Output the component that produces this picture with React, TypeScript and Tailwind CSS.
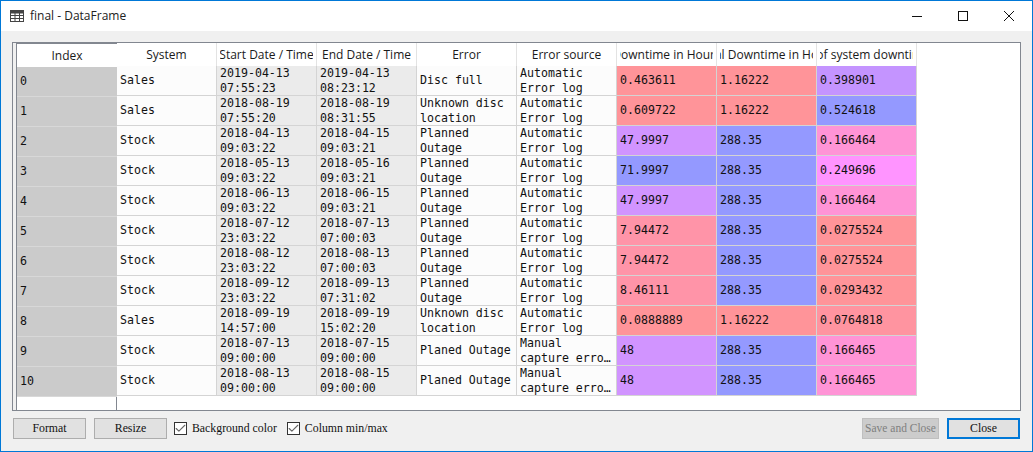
import React from 'react';
import { Check } from 'lucide-react';

const RED = 'bg-[#ff9499]';
const ROSE = 'bg-[#ff94a8]';
const ROSE2 = 'bg-[#ff94a0]';
const PURPLE = 'bg-[#d194ff]';
const VIOLET = 'bg-[#c494ff]';
const BLUE = 'bg-[#9499ff]';
const PINK = 'bg-[#ff94d6]';
const MAGENTA = 'bg-[#ff94ff]';

const HEADERS = [
  'System',
  'Start Date / Time',
  'End Date / Time',
  'Error',
  'Error source',
  'Downtime in Hours',
  'Total Downtime in Hours',
  '% of system downtime',
];

type Row = {
  system: string;
  start: string;
  end: string;
  error: string;
  source: string;
  values: [string, string][];
};

const AUTO = 'Automatic\nError log';
const MANUAL = 'Manual\ncapture erro…';
const PLANNED = 'Planned\nOutage';
const UNKNOWN = 'Unknown disc\nlocation';

const ROWS: Row[] = [
  { system: 'Sales', start: '2019-04-13\n07:55:23', end: '2019-04-13\n08:23:12', error: 'Disc full', source: AUTO, values: [['0.463611', RED], ['1.16222', RED], ['0.398901', VIOLET]] },
  { system: 'Sales', start: '2018-08-19\n07:55:20', end: '2018-08-19\n08:31:55', error: UNKNOWN, source: AUTO, values: [['0.609722', RED], ['1.16222', RED], ['0.524618', BLUE]] },
  { system: 'Stock', start: '2018-04-13\n09:03:22', end: '2018-04-15\n09:03:21', error: PLANNED, source: AUTO, values: [['47.9997', PURPLE], ['288.35', BLUE], ['0.166464', PINK]] },
  { system: 'Stock', start: '2018-05-13\n09:03:22', end: '2018-05-16\n09:03:21', error: PLANNED, source: AUTO, values: [['71.9997', BLUE], ['288.35', BLUE], ['0.249696', MAGENTA]] },
  { system: 'Stock', start: '2018-06-13\n09:03:22', end: '2018-06-15\n09:03:21', error: PLANNED, source: AUTO, values: [['47.9997', PURPLE], ['288.35', BLUE], ['0.166464', PINK]] },
  { system: 'Stock', start: '2018-07-12\n23:03:22', end: '2018-07-13\n07:00:03', error: PLANNED, source: AUTO, values: [['7.94472', ROSE], ['288.35', BLUE], ['0.0275524', RED]] },
  { system: 'Stock', start: '2018-08-12\n23:03:22', end: '2018-08-13\n07:00:03', error: PLANNED, source: AUTO, values: [['7.94472', ROSE], ['288.35', BLUE], ['0.0275524', RED]] },
  { system: 'Stock', start: '2018-09-12\n23:03:22', end: '2018-09-13\n07:31:02', error: PLANNED, source: AUTO, values: [['8.46111', ROSE], ['288.35', BLUE], ['0.0293432', RED]] },
  { system: 'Sales', start: '2018-09-19\n14:57:00', end: '2018-09-19\n15:02:20', error: UNKNOWN, source: AUTO, values: [['0.0888889', RED], ['1.16222', RED], ['0.0764818', ROSE2]] },
  { system: 'Stock', start: '2018-07-13\n09:00:00', end: '2018-07-15\n09:00:00', error: 'Planed Outage', source: MANUAL, values: [['48', PURPLE], ['288.35', BLUE], ['0.166465', PINK]] },
  { system: 'Stock', start: '2018-08-13\n09:00:00', end: '2018-08-15\n09:00:00', error: 'Planed Outage', source: MANUAL, values: [['48', PURPLE], ['288.35', BLUE], ['0.166465', PINK]] },
];

function HeaderCell({ label, className = '' }: { label: string; className?: string }) {
  return (
    <div className={`w-[100px] h-[23px] shrink-0 px-[3px] bg-white border-r border-[#e3e3e3] text-[12px] text-[#1a1a1a] ${className}`}>
      {/* long titles are clipped on both sides, as in a Qt header */}
      <div className="h-full flex items-center justify-center overflow-hidden">
        <span className="shrink-0 whitespace-nowrap">{label}</span>
      </div>
    </div>
  );
}

function Cell({ text, className = '' }: { text: string; className?: string }) {
  return (
    <div className={`w-[100px] h-[30px] shrink-0 flex items-center pl-[3px] border-r border-b border-[#d4d4d4] overflow-hidden ${className}`}>
      <span className="whitespace-pre leading-[15px]">{text}</span>
    </div>
  );
}

function CheckOption({ label }: { label: string }) {
  return (
    <label className="flex items-center gap-[5px]">
      <span className="w-[13px] h-[13px] flex items-center justify-center bg-white border border-[#333333]">
        <Check size={13} strokeWidth={2} className="text-[#666666] shrink-0" />
      </span>
      <span className="whitespace-nowrap">{label}</span>
    </label>
  );
}

export default function App() {
  return (
    <div className="w-[1033px] h-[452px] flex flex-col bg-[#f0f0f0] border border-[#0078d7] overflow-hidden">
      {/* Title bar */}
      <div className="h-[30px] shrink-0 bg-white flex items-center" style={{ fontFamily: '"Open Sans", sans-serif' }}>
        <svg width="14" height="12" viewBox="0 0 14 12" className="ml-[9px] text-[#444444]" fill="none" stroke="currentColor">
          <rect x="0.5" y="0.5" width="13" height="11" />
          <rect x="0.5" y="0.5" width="13" height="2.5" fill="currentColor" />
          <path d="M0.5 5.5H13.5M0.5 8.5H13.5M5 3V11.5M9.5 3V11.5" />
        </svg>
        <span className="ml-[6px] text-[12px] text-[#222222]">final - DataFrame</span>
        <div className="ml-auto flex items-center text-[#111111]">
          <div className="w-[46px] flex justify-center">
            <svg width="10" height="10" viewBox="0 0 10 10" stroke="currentColor" fill="none"><path d="M0 5.5H10" /></svg>
          </div>
          <div className="w-[46px] flex justify-center">
            <svg width="10" height="10" viewBox="0 0 10 10" stroke="currentColor" fill="none"><rect x="0.5" y="0.5" width="9" height="9" /></svg>
          </div>
          <div className="w-[46px] flex justify-center">
            <svg width="10" height="10" viewBox="0 0 10 10" stroke="currentColor" fill="none"><path d="M0 0L10 10M10 0L0 10" /></svg>
          </div>
        </div>
      </div>

      {/* Table frame */}
      <div className="ml-[11px] mr-[11px] mt-[11px] h-[369px] shrink-0 flex border border-[#828790] bg-white text-[11.6px] text-[#111111]" style={{ fontFamily: '"DejaVu Sans Mono", monospace' }}>
        <div className="w-[4px] bg-[#f0f0f0] border-r border-[#828790] shrink-0" />
        {/* Frozen index column */}
        <div className="w-[100px] shrink-0 flex flex-col border-r border-[#828790] border-t">
          <div style={{ fontFamily: '"Open Sans", sans-serif' }}>
            <HeaderCell label="Index" className="w-[99px] h-[22px] border-r-0" />
          </div>
          {ROWS.map((row, i) => (
            <Cell key={i} text={String(i)} className="w-[99px] bg-[#cbcbcb] border-r-0 border-b-[#d8d8d8]" />
          ))}
        </div>
        {/* Data columns */}
        <div className="flex-1 flex flex-col overflow-hidden">
          <div className="flex" style={{ fontFamily: '"Open Sans", sans-serif' }}>
            {HEADERS.map(h => <HeaderCell key={h} label={h} />)}
          </div>
          {ROWS.map((row, i) => (
            <div key={i} className="flex">
              <Cell text={row.system} className="bg-[#fcfcfc]" />
              <Cell text={row.start} className="bg-[#ebebeb]" />
              <Cell text={row.end} className="bg-[#ebebeb]" />
              <Cell text={row.error} className="bg-[#fcfcfc]" />
              <Cell text={row.source} className="bg-[#fcfcfc]" />
              {row.values.map(([v, bg], j) => <Cell key={j} text={v} className={bg} />)}
            </div>
          ))}
        </div>
      </div>

      {/* Footer */}
      <div className="mt-[7px] ml-[12px] mr-[12px] h-[21px] flex items-center text-[11.8px] text-[#111111]" style={{ fontFamily: '"Liberation Serif", serif' }}>
        <button className="w-[73px] h-[21px] bg-[#e1e1e1] border border-[#adadad]">Format</button>
        <button className="ml-[8px] w-[73px] h-[21px] bg-[#e1e1e1] border border-[#adadad]">Resize</button>
        <div className="ml-[7px]"><CheckOption label="Background color" /></div>
        <div className="ml-[10px]"><CheckOption label="Column min/max" /></div>
        <button className="ml-auto w-[77px] h-[21px] bg-[#cccccc] border border-[#bfbfbf] text-[#7f7f7f] text-[11.5px] whitespace-nowrap">Save and Close</button>
        <button className="ml-[8px] w-[73px] h-[21px] bg-[#e1e1e1] border-2 border-[#0078d7]">Close</button>
      </div>
    </div>
  );
}
